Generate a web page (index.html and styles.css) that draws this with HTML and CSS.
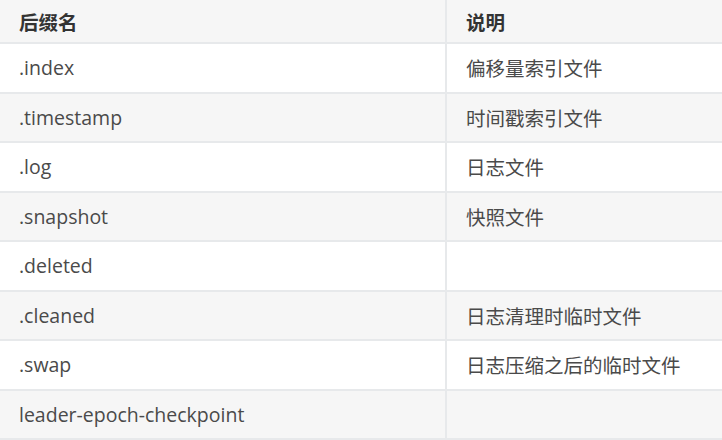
FILE: index.html
```html
<!DOCTYPE html>
<html lang="zh">
<head>
<meta charset="utf-8">
<link rel="stylesheet" href="styles.css">
</head>
<body>
<div class="table">
  <div class="row head"><div class="cell">后缀名</div><div class="cell">说明</div></div>
  <div class="row"><div class="cell">.index</div><div class="cell">偏移量索引文件</div></div>
  <div class="row alt"><div class="cell">.timestamp</div><div class="cell">时间戳索引文件</div></div>
  <div class="row"><div class="cell">.log</div><div class="cell">日志文件</div></div>
  <div class="row alt"><div class="cell">.snapshot</div><div class="cell">快照文件</div></div>
  <div class="row"><div class="cell">.deleted</div><div class="cell"></div></div>
  <div class="row alt"><div class="cell">.cleaned</div><div class="cell">日志清理时临时文件</div></div>
  <div class="row"><div class="cell">.swap</div><div class="cell">日志压缩之后的临时文件</div></div>
  <div class="row alt"><div class="cell">leader-epoch-checkpoint</div><div class="cell"></div></div>
</div>
</body>
</html>
```
FILE: styles.css
```css
html, body {
  margin: 0;
  padding: 0;
  background: #ffffff;
}
.table {
  width: 722px;
  font-family: "Open Sans", "Noto Sans CJK SC", sans-serif;
  font-size: 19.5px;
  color: #4a4a4a;
}
.row {
  display: grid;
  grid-template-columns: 447px 1fr;
  height: 49.5px;
  box-sizing: border-box;
  border-bottom: 2px solid #e7e9eb;
  background: #ffffff;
}
.row.alt {
  background: #f6f6f6;
}
.row.head {
  height: 44px;
  background: #f6f6f6;
  font-weight: 700;
  color: #333333;
}
.cell {
  display: flex;
  align-items: center;
  padding-left: 19px;
  white-space: nowrap;
}
.cell:first-child {
  border-right: 2px solid #e7e9eb;
}
```
